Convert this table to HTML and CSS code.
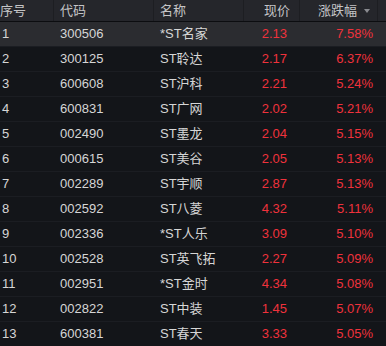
FILE: index.html
```html
<!DOCTYPE html>
<html lang="zh">
<head>
<meta charset="utf-8">
<link rel="stylesheet" href="styles.css">
</head>
<body>
<div class="table">
  <div class="row head">
    <div class="c idx">序号</div>
    <div class="c code">代码</div>
    <div class="c name">名称</div>
    <div class="c price">现价</div>
    <div class="c pct">涨跌幅<span class="tri"></span></div>
    <div class="c tail"></div>
  </div>
  <div class="row sel"><div class="c idx">1</div><div class="c code">300506</div><div class="c name">*ST名家</div><div class="c price">2.13</div><div class="c pct">7.58%</div><div class="c tail"></div></div>
  <div class="row"><div class="c idx">2</div><div class="c code">300125</div><div class="c name">ST聆达</div><div class="c price">2.17</div><div class="c pct">6.37%</div><div class="c tail"></div></div>
  <div class="row"><div class="c idx">3</div><div class="c code">600608</div><div class="c name">ST沪科</div><div class="c price">2.21</div><div class="c pct">5.24%</div><div class="c tail"></div></div>
  <div class="row"><div class="c idx">4</div><div class="c code">600831</div><div class="c name">ST广网</div><div class="c price">2.02</div><div class="c pct">5.21%</div><div class="c tail"></div></div>
  <div class="row"><div class="c idx">5</div><div class="c code">002490</div><div class="c name">ST墨龙</div><div class="c price">2.04</div><div class="c pct">5.15%</div><div class="c tail"></div></div>
  <div class="row"><div class="c idx">6</div><div class="c code">000615</div><div class="c name">ST美谷</div><div class="c price">2.05</div><div class="c pct">5.13%</div><div class="c tail"></div></div>
  <div class="row"><div class="c idx">7</div><div class="c code">002289</div><div class="c name">ST宇顺</div><div class="c price">2.87</div><div class="c pct">5.13%</div><div class="c tail"></div></div>
  <div class="row"><div class="c idx">8</div><div class="c code">002592</div><div class="c name">ST八菱</div><div class="c price">4.32</div><div class="c pct">5.11%</div><div class="c tail"></div></div>
  <div class="row"><div class="c idx">9</div><div class="c code">002336</div><div class="c name">*ST人乐</div><div class="c price">3.09</div><div class="c pct">5.10%</div><div class="c tail"></div></div>
  <div class="row"><div class="c idx">10</div><div class="c code">002528</div><div class="c name">ST英飞拓</div><div class="c price">2.27</div><div class="c pct">5.09%</div><div class="c tail"></div></div>
  <div class="row"><div class="c idx">11</div><div class="c code">002951</div><div class="c name">*ST金时</div><div class="c price">4.34</div><div class="c pct">5.08%</div><div class="c tail"></div></div>
  <div class="row"><div class="c idx">12</div><div class="c code">002822</div><div class="c name">ST中装</div><div class="c price">1.45</div><div class="c pct">5.07%</div><div class="c tail"></div></div>
  <div class="row"><div class="c idx">13</div><div class="c code">600381</div><div class="c name">ST春天</div><div class="c price">3.33</div><div class="c pct">5.05%</div><div class="c tail"></div></div>
</div>
</body>
</html>
```

FILE: styles.css
```css
html, body {
  margin: 0;
  padding: 0;
  background: #131519;
  overflow: hidden;
}
body {
  font-family: "Liberation Sans", "Noto Sans CJK SC", sans-serif;
  font-size: 13px;
  color: #d6d6d6;
}
.table {
  display: flex;
  flex-direction: column;
  width: 386px;
}
.row {
  display: grid;
  grid-template-columns: 54px 100px 90px 56px 78px 8px;
  height: 24px;
  border-bottom: 1px solid #1b1d22;
  align-items: center;
}
.row.head {
  height: 21px;
  background: #25262b;
  border-bottom: 1px solid #0c0d10;
  color: #c4c4c6;
}
.row.sel {
  background: #2b2c30;
}
.c {
  white-space: nowrap;
  line-height: 16px;
}
.head .c {
  height: 21px;
  line-height: 21px;
  border-right: 1px solid #1d1e22;
}
.idx { padding-left: 2px; }
.head .idx { padding-left: 0; }
.code { padding-left: 6px; }
.name { padding-left: 6px; }
.price {
  text-align: right;
  padding-right: 13px;
  color: #f0323c;
}
.head .price { color: #c4c4c6; padding-right: 9px; }
.pct {
  text-align: right;
  padding-right: 5px;
  color: #f0323c;
}
.head .pct {
  color: #c4c4c6;
  padding-right: 7px;
}
.head .tail { border-right: none; }
.tri {
  display: inline-block;
  width: 0;
  height: 0;
  margin-left: 7px;
  vertical-align: middle;
  border-left: 3px solid transparent;
  border-right: 3px solid transparent;
  border-top: 4px solid #8a8b90;
  position: relative;
  top: -1px;
}
```
